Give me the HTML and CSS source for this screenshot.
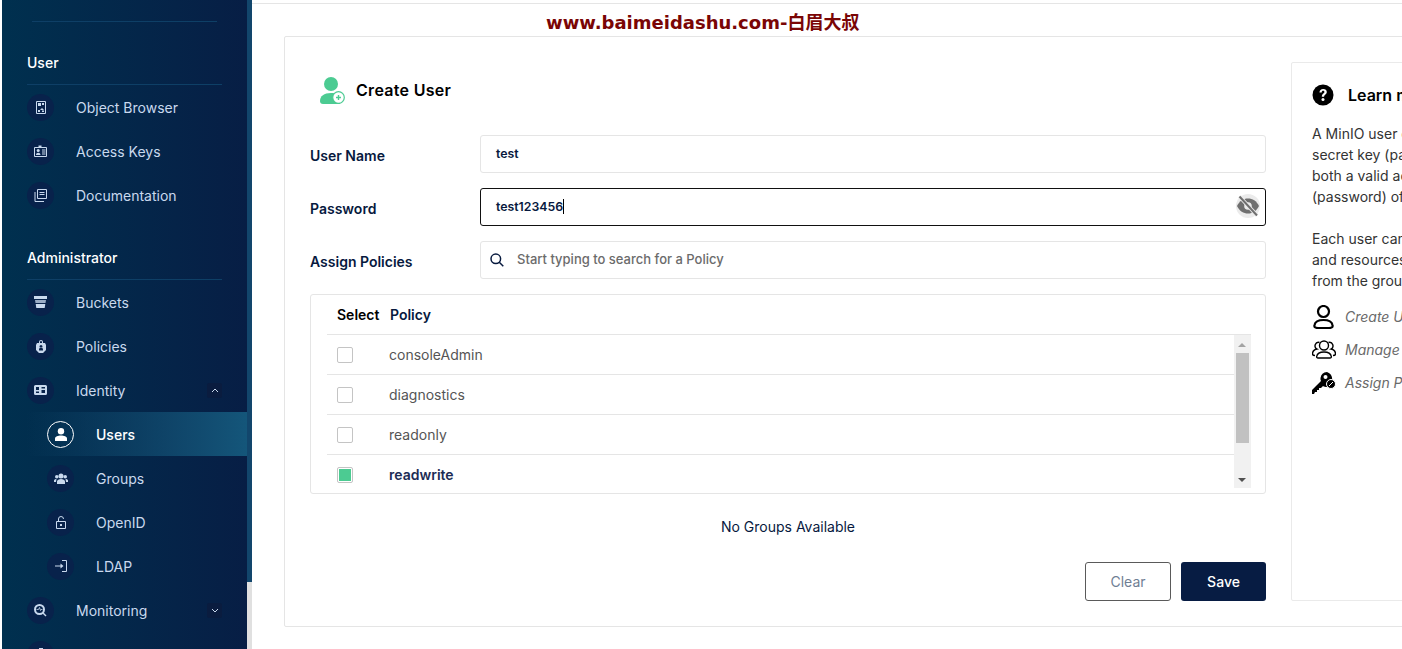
FILE: index.html
```html
<!DOCTYPE html>
<html lang="en">
<head>
<meta charset="utf-8">
<title>Create User</title>
<link rel="stylesheet" href="styles.css">
</head>
<body>
<div class="page">
  <aside class="sidebar">
    <div class="logo-rule"></div>
    <div class="section section-user">User</div>
    <a class="item"><span class="ic"><svg viewBox="0 0 12 13" width="12" height="13"><path d="M1.500.5h9v12h-9z" fill="none" stroke="currentColor"/><path d="M3 2h3v3H3zM7 7l2 2H5zM3 9h2v2H3zM7 2h2v2H7zM7 9.500h2V11H7z" fill="currentColor"/></svg></span><span>Object Browser</span></a>
    <a class="item"><span class="ic"><svg viewBox="0 0 13 12" width="13" height="12"><path d="M.5 2.500h12v9H.5z" fill="none" stroke="currentColor"/><circle cx="4.200" cy="5.500" r="1.500" fill="currentColor"/><path d="M2 10c0-3 4.500-3 4.500 0zM8 4.500h3.500v1H8zM8 6.500h3.500v1H8zM8 8.500h3.500v1H8zM4.500 .5h3v2h-3z" fill="currentColor"/></svg></span><span>Access Keys</span></a>
    <a class="item"><span class="ic"><svg viewBox="0 0 13 13" width="13" height="13"><path d="M3.500.5h9v9h-9z" fill="none" stroke="currentColor"/><path d="M1 3v9.500h9" fill="none" stroke="currentColor"/><path d="M5.500 3h5v1h-5zM5.500 5h5v1h-5z" fill="currentColor"/></svg></span><span>Documentation</span></a>
    <div class="section section-admin">Administrator</div>
    <a class="item"><span class="ic"><svg viewBox="0 0 13 12" width="13" height="12" fill="currentColor"><path d="M0 0h13v3H0z"/><path d="M1 4h11l-.5 3h-10z" opacity=".75"/><path d="M1.700 8h9.600l-.6 4H2.300z"/></svg></span><span>Buckets</span></a>
    <a class="item"><span class="ic"><svg viewBox="0 0 10 13" width="10" height="13" fill="currentColor"><path d="M3 3V2a2 2 0 0 1 4 0v1h-1V2a1 1 0 0 0-2 0v1z"/><path fill-rule="evenodd" d="M1 3h8l1 2v5l-3 3H3l-3-3V5zM5 5a1.500 1.500 0 1 0 0 3 1.500 1.500 0 0 0 0-3zM3 9.500v1h4v-1a2 2 0 0 0-4 0z"/></svg></span><span>Policies</span></a>
    <a class="item"><span class="ic"><svg viewBox="0 0 13 10" width="13" height="10"><path fill="currentColor" fill-rule="evenodd" d="M1.500 0h10A1.500 1.500 0 0 1 13 1.500v7a1.500 1.500 0 0 1-1.500 1.500h-10A1.500 1.500 0 0 1 0 8.500v-7A1.500 1.500 0 0 1 1.500 0zM2 2v3h3V2zM2 6.500V8h3V6.500zM7.500 2v1.500H11V2zM7.500 5v3H11V5z"/></svg></span><span class="grow">Identity</span><span class="chev"><svg viewBox="0 0 8 5" width="8" height="5"><path d="M1 4l3-3 3 3" fill="none" stroke="currentColor"/></svg></span></a>
    <a class="item sub active"><span class="ic"><svg viewBox="0 0 12 13" width="12" height="13" fill="#fff"><circle cx="6" cy="3.200" r="3.200"/><path d="M0 13v-2.500C0 8.500 3 7.500 6 7.500s6 1 6 3V13z"/></svg></span><span>Users</span></a>
    <a class="item sub"><span class="ic"><svg viewBox="0 0 14 11" width="14" height="11" fill="currentColor"><circle cx="7" cy="3" r="2.500"/><circle cx="2.800" cy="3.800" r="1.800"/><circle cx="11.200" cy="3.800" r="1.800"/><path d="M3 11V8.500C3 7 5 6 7 6s4 1 4 2.500V11zM0 9V7.500C0 6.500 1.500 6 2.500 6L2 9zM14 9V7.500C14 6.500 12.500 6 11.500 6L12 9z"/></svg></span><span>Groups</span></a>
    <a class="item sub"><span class="ic"><svg viewBox="0 0 10 13" width="10" height="13"><path d="M2.500 5V3a2.500 2.500 0 0 1 5 0" fill="none" stroke="currentColor"/><path d="M.5 5.500h9v7h-9z" fill="none" stroke="currentColor"/><path d="M4 8h2v2H4z" fill="currentColor"/></svg></span><span>OpenID</span></a>
    <a class="item sub"><span class="ic"><svg viewBox="0 0 12 12" width="12" height="12"><path d="M7 .5h4.500v11H7" fill="none" stroke="currentColor"/><path d="M0 5.500h5.500V3.500L8.500 6l-3 2.500v-2H0z" fill="currentColor"/></svg></span><span>LDAP</span></a>
    <a class="item"><span class="ic"><svg viewBox="0 0 13 13" width="13" height="13"><circle cx="5.500" cy="5.500" r="4.500" fill="none" stroke="currentColor" stroke-width="2"/><path d="M2.500 5.500h2l1-2 1 3 .5-1h1.500" fill="none" stroke="currentColor" stroke-width=".8"/><path d="M8.500 9.500l1-1 3 3-1 1z" fill="currentColor"/></svg></span><span class="grow">Monitoring</span><span class="chev"><svg viewBox="0 0 8 5" width="8" height="5"><path d="M1 1l3 3 3-3" fill="none" stroke="currentColor"/></svg></span></a>
    <a class="item"><span class="ic"><svg viewBox="0 0 4 13" width="4" height="13"><path d="M0 0h4v13H0z" fill="currentColor"/></svg></span></a>
  </aside>
  <div class="rail"></div>
  <main class="main">
    <div class="watermark">www.baimeidashu.com-白眉大叔</div>
    <section class="card">
      <div class="form">
        <header class="title">
          <svg class="title-icon" viewBox="0 0 25 27" width="25" height="27">
            <circle cx="11" cy="7" r="7" fill="#4ccb92"/>
            <path d="M3 27c-2 0-3-1-3-3 0-5 4-8 11-8 3 0 5 .4 7 1l2 10z" fill="#4ccb92"/>
            <circle cx="18.500" cy="20.500" r="5.800" fill="#fff" stroke="#4ccb92" stroke-width="1.200"/>
            <path d="M16 19.800h1.800V18h1.400v1.800H21v1.400h-1.800V23h-1.400v-1.800H16z" fill="#4ccb92"/>
          </svg>
          <h1>Create User</h1>
        </header>
        <div class="row">
          <label class="label">User Name</label>
          <div class="field"><span class="val">test</span></div>
        </div>
        <div class="row">
          <label class="label">Password</label>
          <div class="field focus"><span class="val">test123456</span><span class="caret"></span>
            <span class="eye"><svg viewBox="0 0 24 24" width="24" height="24"><path fill="#6f6f6f" d="M1 12C3.500 6.800 7.500 4.500 12 4.500S20.500 6.800 23 12c-2.500 5.200-6.500 7.500-11 7.500S3.500 17.200 1 12z"/><circle cx="12" cy="12" r="3.800" fill="#ebebeb"/><path d="M3.500 2.500l17.500 19" stroke="#ebebeb" stroke-width="4"/><path d="M3.500 2.500l17.500 19" stroke="#6f6f6f" stroke-width="2"/></svg></span>
          </div>
        </div>
        <div class="row">
          <label class="label">Assign Policies</label>
          <div class="field search">
            <svg viewBox="0 0 14 14" width="14" height="14"><circle cx="5.800" cy="5.800" r="4.800" fill="none" stroke="#07193e" stroke-width="1.500"/><path d="M9.300 9.300L13.300 13.300" stroke="#07193e" stroke-width="1.500"/></svg>
            <span class="placeholder">Start typing to search for a Policy</span>
          </div>
        </div>
        <div class="table">
          <div class="thead"><span class="th-select">Select</span><span>Policy</span></div>
          <div class="tbody">
            <div class="rows">
              <div class="tr"><span class="check"></span><span>consoleAdmin</span></div>
              <div class="tr"><span class="check"></span><span>diagnostics</span></div>
              <div class="tr"><span class="check"></span><span>readonly</span></div>
              <div class="tr selected"><span class="check on"></span><span>readwrite</span></div>
            </div>
            <div class="scrollbar">
              <span class="arrow up"></span>
              <span class="thumb"></span>
              <span class="arrow down"></span>
            </div>
          </div>
        </div>
        <p class="empty">No Groups Available</p>
        <div class="actions">
          <button class="btn clear">Clear</button>
          <button class="btn save">Save</button>
        </div>
      </div>
      <aside class="help">
        <header class="help-title">
          <svg viewBox="0 0 22 22" width="22" height="22"><circle cx="11" cy="11" r="10.500" fill="#000"/><path d="M7.500 8.500C7.500 6.300 9 5 11.200 5c2.200 0 3.600 1.300 3.600 3 0 2.500-2.700 2.500-2.700 4.700H9.800c0-3 2.600-3.200 2.600-4.700 0-.8-.5-1.200-1.300-1.200-.9 0-1.400.6-1.400 1.700z" fill="#fff"/><circle cx="11" cy="15.500" r="1.500" fill="#fff"/></svg>
          <h2>Learn more</h2>
        </header>
        <p class="help-text">A MinIO user consists of a unique access key (username) and corresponding<br>secret key (password). Clients must authenticate their identity by specifying<br>both a valid access key (username) and the corresponding secret key<br>(password) of an existing MinIO user.</p>
        <p class="help-text">Each user can have one or more assigned policies that explicitly list the actions<br>and resources to which that user has access. Users can also inherit policies<br>from the groups to which they belong.</p>
        <ul class="help-list">
          <li><span class="help-ic"><svg viewBox="0 0 23 24" width="23" height="24"><circle cx="11.500" cy="6.500" r="5.500" fill="none" stroke="#000" stroke-width="2.200"/><path d="M6 23c-3 0-4-1-3.500-3 .6-3 4-5 9-5s8.400 2 9 5c.5 2-.5 3-3.500 3z" fill="none" stroke="#000" stroke-width="2.200"/></svg></span><em>Create Users</em></li>
          <li><span class="help-ic"><svg viewBox="0 0 24 19" width="24" height="19" fill="none" stroke="#000" stroke-width="1.400"><circle cx="12" cy="5.500" r="4.500"/><path d="M6 18c-1 0-1.500-.5-1.300-1.500.5-3 3.500-4.500 7.300-4.500s6.800 1.500 7.300 4.500c.2 1-.3 1.500-1.300 1.500z"/><path d="M7.500 2.500A3.500 3.500 0 0 0 5 9c-2.500.5-4.500 2-4.500 5 0 1 1 1.500 2.500 1.500M16.500 2.500A3.500 3.500 0 0 1 19 9c2.500.5 4.500 2 4.500 5 0 1-1 1.500-2.500 1.500"/></svg></span><em>Manage Groups</em></li>
          <li><span class="help-ic"><svg viewBox="0 0 24 22" width="24" height="22"><path fill="#000" d="M15 0a8 8 0 0 1 0 15c-1.500 0-3-.4-4-1l-2 2H7v2H5v2H3l-1 2H0v-4l9-9c-.5-1-.7-2-.5-3A7 7 0 0 1 15 0z"/><circle cx="13.500" cy="5" r="2" fill="#fff"/><circle cx="19" cy="12" r="4.500" fill="#000" stroke="#fff"/><path d="M17 14l4-4" stroke="#fff"/></svg></span><em>Assign Policies</em></li>
        </ul>
      </aside>
    </section>
  </main>
</div>
</body>
</html>
```

FILE: styles.css
```css
* { box-sizing: border-box; }
html, body { margin: 0; height: 100%; overflow: hidden; background: #fff; }
body { font-family: Inter, "Noto Sans", sans-serif; font-size: 14px; color: #07193e; }
.page { display: flex; height: 649px; padding-left: 2px; overflow: hidden; }

.sidebar { flex: 0 0 245px; height: 649px; overflow: hidden; background: linear-gradient(90deg, #00304f 0%, #071e45 100%); color: #c9d9ee; }
.logo-rule { height: 1px; margin: 21px 30px 0 30px; background: #0e3f66; }
.section { margin: 0 25px; color: #fff; font-weight: 500; border-bottom: 1px solid #0e3f66; line-height: 17px; }
.section-user { margin-top: 32px; padding: 0 0 13px; }
.section-admin { margin-top: 32px; padding: 0 0 13px; }
.item { display: flex; align-items: center; height: 44px; padding: 0 25px; }
.item.sub { padding-left: 45px; }
.ic { flex: 0 0 27px; width: 27px; height: 27px; margin-right: 22px; border-radius: 50%; background: #08224b; display: flex; align-items: center; justify-content: center; color: #c9d9ee; }
.item.active { background: linear-gradient(90deg, rgba(20,86,122,0) 10%, #14567a 100%); color: #fff; font-weight: 500; }
.active .ic { background: transparent; border: 1.500px solid #fff; }
.grow { flex: 1; }
.chev { width: 15px; height: 15px; background: #0a1c3f; border-radius: 2px; display: flex; align-items: center; justify-content: center; }
.rail { flex: 0 0 5px; height: 649px; background: linear-gradient(#12466c 0 582px, #e0e0e0 582px); }

.main { position: relative; flex: 1; min-width: 0; overflow: hidden; border-top: 1px solid #e5e5e5; margin-top: 3px; padding: 32px 0 0 32px; }
.watermark { position: absolute; left: 294px; top: 7px; font-family: "DejaVu Sans", "Noto Sans CJK SC", sans-serif; font-weight: 700; font-size: 18px; line-height: 24px; color: #7a0505; white-space: nowrap; }
.card { display: flex; gap: 25px; width: 1300px; height: 591px; padding: 25px; border: 1px solid #e5e5e5; border-radius: 2px; }
.form { flex: 0 0 956px; }
.title { display: flex; align-items: center; gap: 11px; height: 56px; padding: 0 0 0 10px; margin-bottom: 17px; }
.title h1 { margin: 0; font-size: 16px; font-weight: 600; letter-spacing: .3px; color: #000; }

.row { display: flex; height: 38px; margin-bottom: 15px; }
.label { flex: 0 0 170px; padding-top: 12px; font-weight: 600; font-size: 14px; line-height: 17px; color: #07193e; }
.field { position: relative; flex: 1; display: flex; align-items: center; padding: 0 0 2px 15px; border: 1px solid #e5e5e5; border-radius: 3px; font-size: 12.300px; font-weight: 600; }
.field.focus { border-color: #111; }
.caret { width: 1px; height: 15px; background: #000; }
.eye { position: absolute; right: 5px; top: 5px; width: 24px; height: 24px; border-radius: 50%; background: #ebebeb; }
.eye svg { display: block; }
.search { padding-left: 9px; gap: 13px; }
.search svg { margin-top: 2px; }
.placeholder { font-size: 13px; font-weight: 500; color: #6b6b6b; }

.table { height: 200px; padding: 0 14px 6px 16px; border: 1px solid #e5e5e5; border-radius: 3px; }
.thead { display: flex; align-items: center; height: 40px; padding-left: 10px; border-bottom: 1px solid #e5e5e5; font-weight: 600; color: #07193e; }
.th-select { width: 53px; color: #000; }
.tbody { display: flex; height: 153px; overflow: hidden; }
.rows { flex: 1; }
.tr { display: flex; align-items: center; height: 40px; padding-left: 10px; border-bottom: 1px solid #e5e5e5; color: #555; }
.tr:last-child { border-bottom-color: transparent; }
.tr.selected { font-weight: 600; color: #1c2c55; }
.check { flex: 0 0 16px; width: 16px; height: 16px; margin-right: 36px; border: 1px solid #c4c4c4; border-radius: 2px; background: #fff; }
.check.on { padding: 1px; background: #4ccb92 content-box; }
.scrollbar { position: relative; flex: 0 0 17px; height: 153px; background: #f1f1f1; }
.thumb { position: absolute; left: 2px; top: 18px; width: 13px; height: 90px; background: #c1c1c1; }
.arrow { position: absolute; left: 4px; width: 0; height: 0; border-left: 4px solid transparent; border-right: 4px solid transparent; }
.arrow.up { top: 8px; border-bottom: 4px solid #a3a3a3; }
.arrow.down { bottom: 6px; border-top: 4px solid #505050; }

.empty { margin: 24px 0 0; height: 18px; line-height: 18px; text-align: center; font-size: 14px; color: #07193e; }
.actions { display: flex; justify-content: flex-end; gap: 10px; margin-top: 26px; }
.btn { height: 39px; border-radius: 3px; font: 500 14px Inter, sans-serif; }
.clear { width: 86px; border: 1px solid #5a5a5a; background: #fff; color: #6f7e94; font-weight: 400; }
.save { width: 85px; border: 0; background: #071c43; color: #fff; }

.help { flex: 0 0 400px; height: 539px; padding: 21px 20px; border: 1px solid #eaeaea; border-radius: 2px; white-space: nowrap; }
.help-title { display: flex; align-items: center; gap: 14px; height: 22px; margin-bottom: 17px; }
.help-title h2 { margin: 0; font-size: 16px; font-weight: 600; color: #000; }
.help-text { margin: 0 0 21px; line-height: 21px; font-size: 14px; color: #333; }
.help-list { list-style: none; margin: -12px 0 0; padding: 0; }
.help-list li { display: flex; align-items: center; height: 33px; }
.help-ic { flex: 0 0 33px; }
.help-ic svg { display: block; }
.help-list em { color: #6a6a6a; font-size: 14px; }
```
